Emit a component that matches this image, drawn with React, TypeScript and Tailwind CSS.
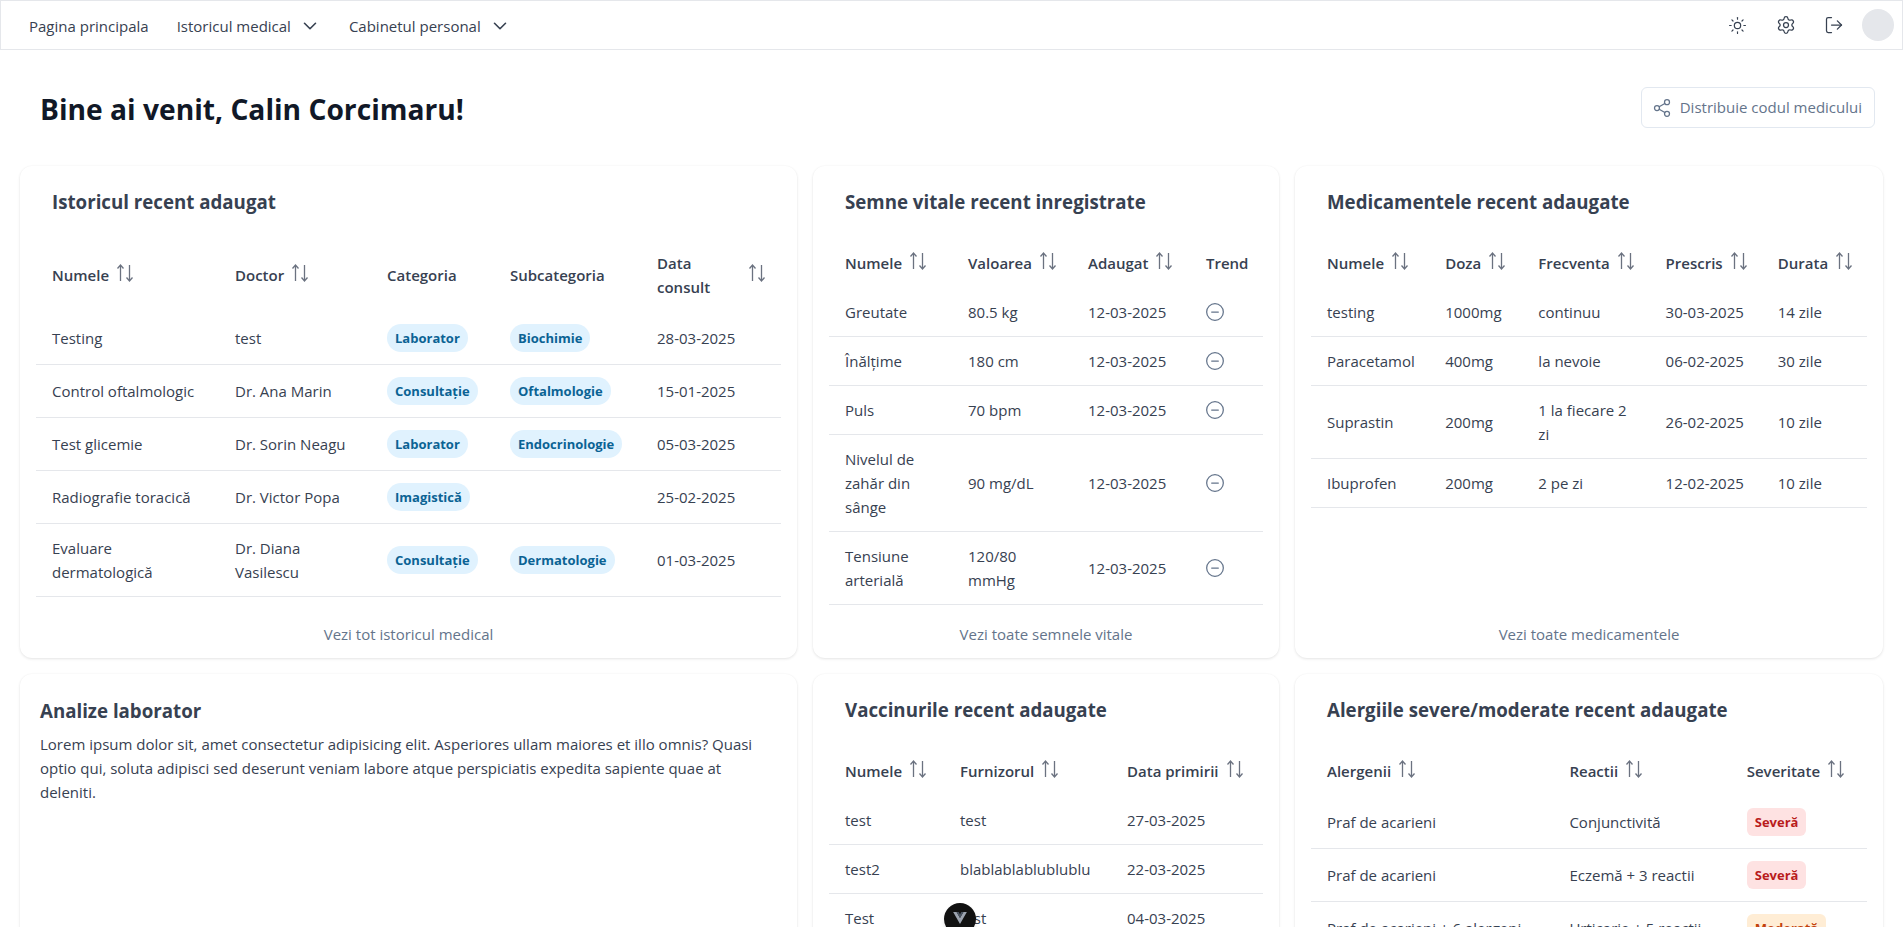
import { ChevronDown, CircleMinus, LogOut, Settings, Share2, Sun } from "lucide-react";

const FONT = "font-['Open_Sans','Noto_Sans',sans-serif]";
const CARD_SHADOW = "shadow-[0_1px_3px_rgba(0,0,0,0.1),0_0_2px_rgba(0,0,0,0.03)]";

type Col = { label: React.ReactNode; sort?: boolean; width: string; between?: boolean };

function SortIcon() {
  return (
    <svg viewBox="0 0 16 18" fill="none" stroke="currentColor" strokeWidth={1.3} className="-mt-1 ml-2 h-[18px] w-4 shrink-0 text-[#6b7280]">
      <path d="M3.500 17V1M0.500 4.500 3.500 1l3 3.500" />
      <path d="M12.500 1v16M9.500 13.500l3 3.500 3-3.500" />
    </svg>
  );
}

function Th({ col }: { col: Col }) {
  return (
    <th className={`px-4 py-[13px] text-left align-middle text-[15px] font-semibold leading-6 text-[#374151] ${col.width}`}>
      <div className={`flex items-center ${col.between ? "justify-between" : ""}`}>
        <span>{col.label}</span>
        {col.sort && <SortIcon />}
      </div>
    </th>
  );
}

function Pill({ children }: { children: string }) {
  return (
    <span className="inline-block rounded-full bg-[#e0f2fe] px-2 py-0.5 text-[13px] font-bold leading-6 text-[#0b6394]">
      {children}
    </span>
  );
}

function Severity({ level }: { level: "Severă" | "Moderată" }) {
  const cls = level === "Severă" ? "bg-[#fee2e2] text-[#b91c1c]" : "bg-[#ffedd5] text-[#c2410c]";
  return <span className={`inline-block rounded-md px-2 py-0.5 text-[13px] font-bold leading-6 ${cls}`}>{level}</span>;
}

function Card({ title, children, link }: { title: string; children: React.ReactNode; link?: string }) {
  return (
    <div className={`flex flex-col rounded-xl bg-white px-4 pb-3 pt-4 ${CARD_SHADOW}`}>
      <h2 className="px-4 pb-[22px] pt-1.5 text-[18.7px] font-bold leading-7 text-[#374151]">{title}</h2>
      <div className="flex-1">{children}</div>
      {link && <a className="block text-center text-[15px] leading-6 text-[#64748b]">{link}</a>}
    </div>
  );
}

function Table({ cols, rows }: { cols: Col[]; rows: React.ReactNode[][] }) {
  return (
    <table className="w-full table-fixed border-collapse">
      <thead>
        <tr>
          {cols.map((c, i) => (
            <Th key={i} col={c} />
          ))}
        </tr>
      </thead>
      <tbody>
        {rows.map((r, i) => (
          <tr key={i} className="border-b border-[#e5e7eb]">
            {r.map((cell, j) => (
              <td key={j} className="px-4 py-3 align-middle text-[15px] leading-6 text-[#374151]">
                {cell}
              </td>
            ))}
          </tr>
        ))}
      </tbody>
    </table>
  );
}

const minus = <CircleMinus className="-ml-px h-5 w-5 text-[#64748b]" strokeWidth={1.5} />;

const historyRows = [
  ["Testing", "test", <Pill>Laborator</Pill>, <Pill>Biochimie</Pill>, "28-03-2025"],
  ["Control oftalmologic", "Dr. Ana Marin", <Pill>Consultație</Pill>, <Pill>Oftalmologie</Pill>, "15-01-2025"],
  ["Test glicemie", "Dr. Sorin Neagu", <Pill>Laborator</Pill>, <Pill>Endocrinologie</Pill>, "05-03-2025"],
  ["Radiografie toracică", "Dr. Victor Popa", <Pill>Imagistică</Pill>, "", "25-02-2025"],
  [
    <>
      Evaluare
      <br />
      dermatologică
    </>,
    <>
      Dr. Diana
      <br />
      Vasilescu
    </>,
    <Pill>Consultație</Pill>,
    <Pill>Dermatologie</Pill>,
    "01-03-2025",
  ],
];

const vitalRows = [
  ["Greutate", "80.5 kg", "12-03-2025", minus],
  ["Înălțime", "180 cm", "12-03-2025", minus],
  ["Puls", "70 bpm", "12-03-2025", minus],
  ["Nivelul de zahăr din sânge", "90 mg/dL", "12-03-2025", minus],
  ["Tensiune arterială", "120/80 mmHg", "12-03-2025", minus],
];

const medRows = [
  ["testing", "1000mg", "continuu", "30-03-2025", "14 zile"],
  ["Paracetamol", "400mg", "la nevoie", "06-02-2025", "30 zile"],
  ["Suprastin", "200mg", "1 la fiecare 2 zi", "26-02-2025", "10 zile"],
  ["Ibuprofen", "200mg", "2 pe zi", "12-02-2025", "10 zile"],
];

const vaccineRows = [
  ["test", "test", "27-03-2025"],
  ["test2", "blablablablublublu", "22-03-2025"],
  ["Test", "test", "04-03-2025"],
];

const allergyRows = [
  ["Praf de acarieni", "Conjunctivită", <Severity level="Severă" />],
  ["Praf de acarieni", "Eczemă + 3 reactii", <Severity level="Severă" />],
  ["Praf de acarieni + 6 alergeni", "Urticarie + 5 reactii", <Severity level="Moderată" />],
];

export default function App() {
  return (
    <div className={`relative h-screen overflow-hidden bg-white ${FONT}`}>
      {/* Navbar */}
      <nav className="flex h-[50px] items-center justify-between border border-[#e5e7eb] pl-[28px] pr-2 text-[15px] text-[#374151]">
        <div className="flex items-center gap-7 pt-0.5">
          <span>Pagina principala</span>
          <span className="flex items-center gap-2">
            Istoricul medical <ChevronDown className="h-[22px] w-[22px]" strokeWidth={1.75} />
          </span>
          <span className="flex items-center gap-2">
            Cabinetul personal <ChevronDown className="h-[22px] w-[22px]" strokeWidth={1.75} />
          </span>
        </div>
        <div className="flex items-center">
          <Sun className="h-[19px] w-[19px]" strokeWidth={1.5} />
          <Settings className="ml-[29px] h-5 w-5" strokeWidth={1.5} />
          <LogOut className="ml-7 h-5 w-5" strokeWidth={1.5} />
          <div className="ml-[18px] h-8 w-8 rounded-full bg-[#e5e7eb]" />
        </div>
      </nav>

      {/* Heading */}
      <div className="flex items-start justify-between pb-9 pl-10 pr-7 pt-[37px]">
        <h1 className="mt-0.5 text-[28.2px] font-bold leading-[41px] text-[#111827]">Bine ai venit, Calin Corcimaru!</h1>
        <button className="flex h-[41px] items-center gap-2 rounded-md border border-[#e2e8f0] pl-2.5 pr-3 text-[15px] text-[#64748b]">
          <Share2 className="h-5 w-5" strokeWidth={1.5} />
          Distribuie codul medicului
        </button>
      </div>

      {/* Cards */}
      <div className="grid grid-cols-[777px_466px_588px] grid-rows-[492px_auto] gap-4 pl-5">
        <Card title="Istoricul recent adaugat" link="Vezi tot istoricul medical">
          <Table
            cols={[
              { label: "Numele", sort: true, width: "w-[183px]" },
              { label: "Doctor", sort: true, width: "w-[152px]" },
              { label: "Categoria", width: "w-[123px]" },
              { label: "Subcategoria", width: "w-[147px]" },
              {
                label: (
                  <>
                    Data
                    <br />
                    consult
                  </>
                ),
                sort: true,
                width: "w-[140px]",
                between: true,
              },
            ]}
            rows={historyRows}
          />
        </Card>
        <Card title="Semne vitale recent inregistrate" link="Vezi toate semnele vitale">
          <Table
            cols={[
              { label: "Numele", sort: true, width: "w-[123px]" },
              { label: "Valoarea", sort: true, width: "w-[120px]" },
              { label: "Adaugat", sort: true, width: "w-[118px]" },
              { label: "Trend", width: "w-[73px]" },
            ]}
            rows={vitalRows}
          />
        </Card>
        <Card title="Medicamentele recent adaugate" link="Vezi toate medicamentele">
          <Table
            cols={[
              { label: "Numele", sort: true, width: "w-[118px]" },
              { label: "Doza", sort: true, width: "w-[93px]" },
              { label: "Frecventa", sort: true, width: "w-[127px]" },
              { label: "Prescris", sort: true, width: "w-[112px]" },
              { label: "Durata", sort: true, width: "w-[105px]" },
            ]}
            rows={medRows}
          />
        </Card>
        <div className={`rounded-xl bg-white px-5 pb-5 pt-[23px] ${CARD_SHADOW}`}>
          <h2 className="mb-[7px] text-[18.7px] font-bold leading-7 text-[#374151]">Analize laborator</h2>
          <p className="text-[15px] leading-6 text-[#374151]">
            Lorem ipsum dolor sit, amet consectetur adipisicing elit. Asperiores ullam maiores et illo omnis? Quasi optio
            qui, soluta adipisci sed deserunt veniam labore atque perspiciatis expedita sapiente quae at deleniti.
          </p>
        </div>
        <Card title="Vaccinurile recent adaugate">
          <Table
            cols={[
              { label: "Numele", sort: true, width: "w-[115px]" },
              { label: "Furnizorul", sort: true, width: "w-[167px]" },
              { label: "Data primirii", sort: true, width: "w-[152px]" },
            ]}
            rows={vaccineRows}
          />
        </Card>
        <Card title="Alergiile severe/moderate recent adaugate">
          <Table
            cols={[
              { label: "Alergenii", sort: true, width: "w-[242px]" },
              { label: "Reactii", sort: true, width: "w-[177px]" },
              { label: "Severitate", sort: true, width: "w-[136px]" },
            ]}
            rows={allergyRows}
          />
        </Card>
      </div>

      {/* Vue devtools toggle */}
      <div className="absolute left-[944px] top-[903px] flex h-8 w-8 items-start justify-center rounded-full bg-[#111111] pt-[9px] shadow-md">
        <svg viewBox="0 0 16 14" className="h-3 w-3.5">
          <path d="M0 0h4l4 7 4-7h4L8 14z" fill="#9ca3af" />
          <path d="M4 0h2.500L8 3 9.500 0H12L8 7z" fill="#4b5563" />
        </svg>
      </div>
    </div>
  );
}
